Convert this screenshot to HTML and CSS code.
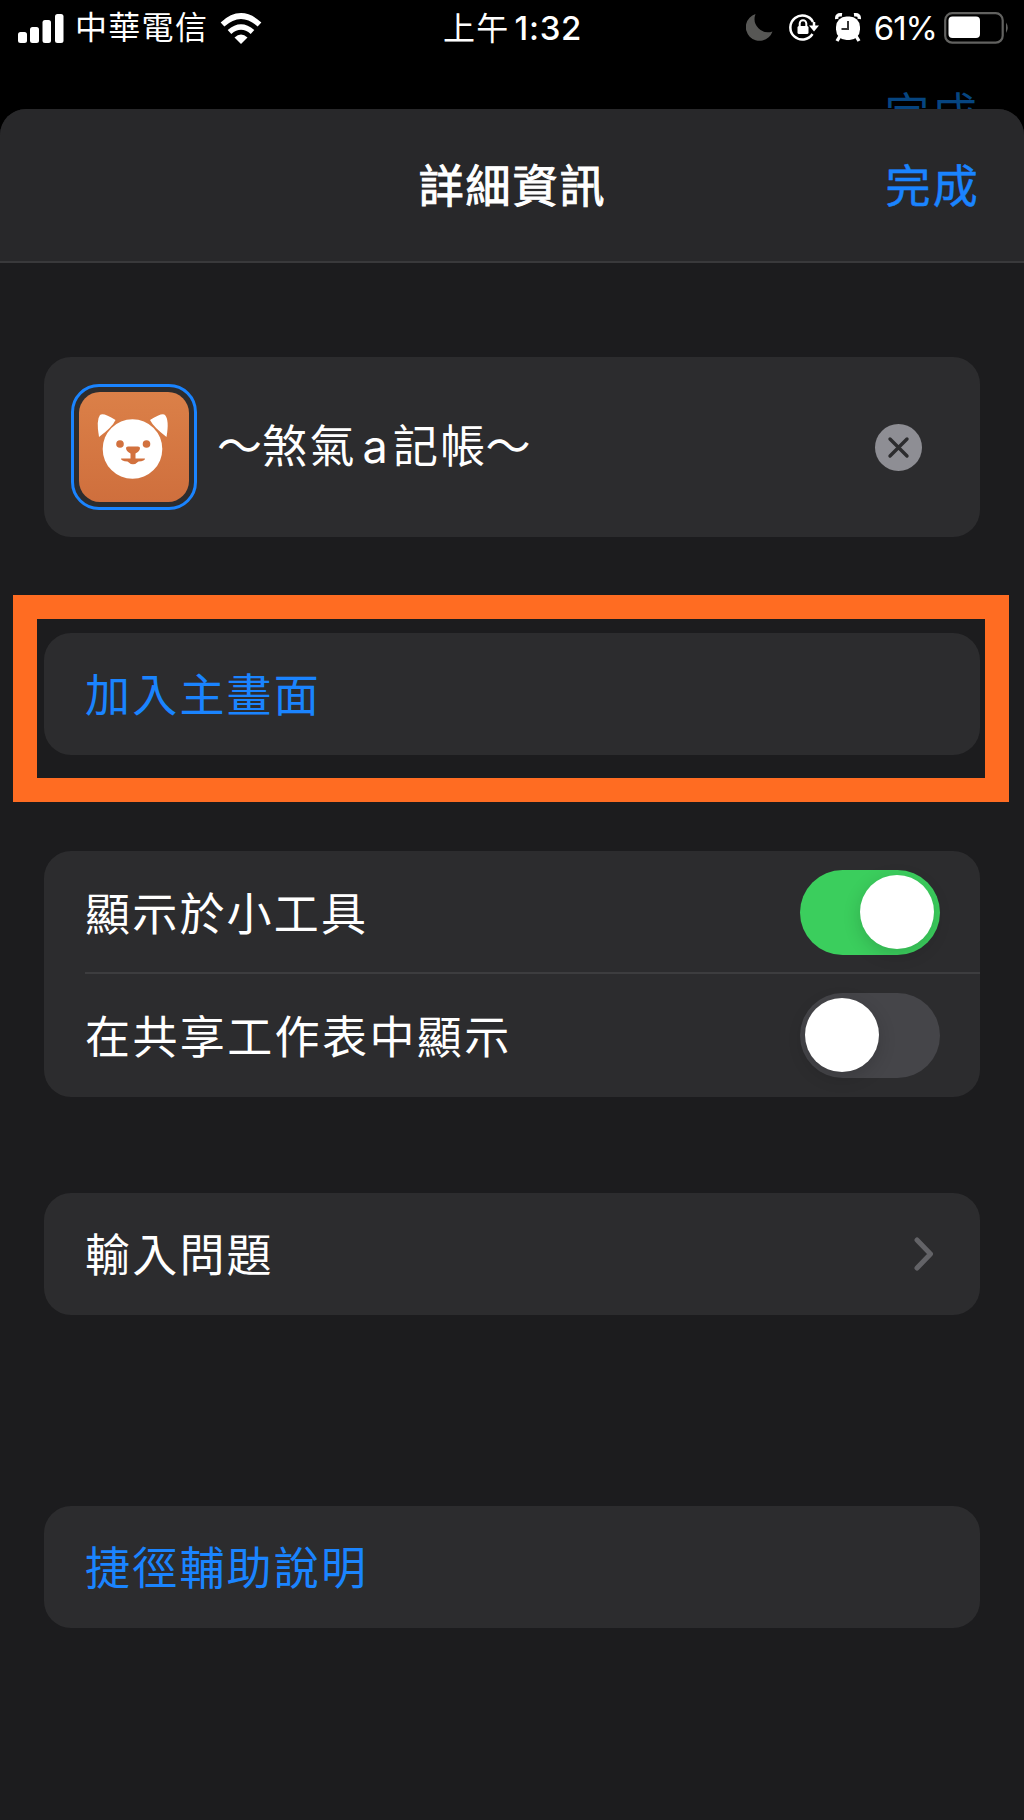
FILE: index.html
```html
<!DOCTYPE html>
<html lang="zh-Hant">
<head>
<meta charset="utf-8">
<title>詳細資訊</title>
<link rel="stylesheet" href="styles.css">
</head>
<body>
<div class="status">
  <div class="status-left">
    <svg class="signal" width="46" height="29" viewBox="0 0 46 29" fill="#fff"><rect x="0" y="18" width="9" height="11" rx="2.5"/><rect x="12" y="13" width="9" height="16" rx="2.5"/><rect x="24.500" y="6" width="8.500" height="23" rx="2.500"/><rect x="37" y="0" width="8.500" height="29" rx="2.500"/></svg>
    <span class="carrier">中華電信</span>
    <svg class="wifi" width="42" height="31" viewBox="0 0 42 31"><g fill="none" stroke="#fff" stroke-width="5.500"><path d="M2.500 11.500Q21-5.500 39.500 11.500"/><path d="M9.500 19Q21 9 32.500 19"/></g><path d="M14.500 24.500Q21 18.500 27.500 24.500L21 31Z" fill="#fff"/></svg>
  </div>
  <div class="time"><span>上午</span><span class="clock">1:32</span></div>
  <div class="status-right">
    <svg width="27" height="27" viewBox="0 0 27 27"><path d="M9.500 0A13.700 13.700 0 1 0 26.500 17.500A13.500 13.500 0 0 1 9.500 0Z" fill="#575755"/></svg>
    <svg class="lock" width="30" height="27" viewBox="0 0 30 27"><g fill="none" stroke="#fff" stroke-width="2.500"><path d="M24 8A12 12 0 1 0 23.500 20"/><path d="M10.700 13V9.500a3.300 3.300 0 0 1 6.600 0V13" stroke-width="2"/></g><rect x="8.500" y="12" width="11" height="8" rx="1.500" fill="#fff"/><path d="M20 11.500H30L25 17.500Z" fill="#fff"/><path d="M25 8v5" stroke="#fff" stroke-width="2.500"/></svg>
    <svg class="alarm" width="26" height="29" viewBox="0 0 26 29"><path d="M1.800 6Q1 1 7 1.800M24.200 6Q25 1 19 1.800M5 23L2 28M21 23L24 28" fill="none" stroke="#fff" stroke-width="3.400"/><rect x="1" y="3.500" width="24" height="23.500" rx="10.500" fill="#fff"/><path d="M13 8V16H6.500" fill="none" stroke="#333" stroke-width="2"/></svg>
    <span class="percent">61%</span>
    <svg class="battery" width="66" height="32" viewBox="0 0 66 32"><rect x="1.200" y="1.200" width="57.500" height="29.500" rx="7" fill="none" stroke="#626260" stroke-width="2.200"/><rect x="4.500" y="4.500" width="31.500" height="21.500" rx="4" fill="#fff"/><path d="M62 10.500Q65.500 15.500 62 21Z" fill="#626260"/></svg>
  </div>
</div>
<div class="backdrop"><span>完成</span></div>
<main class="sheet">
  <header class="header"><span></span><h1>詳細資訊</h1><a class="done">完成</a></header>
  <section class="card name-card">
    <div class="icon-ring"><div class="icon">
      <svg width="110" height="110" viewBox="0 0 110 110"><g fill="#fff"><path d="M20 45Q17 28 21 23Q24 20 36.500 28Q33.500 35 20 45Z"/><path d="M87.500 45Q90.500 28 86 23Q83.500 20 71 28Q74.500 35 87.500 45Z"/><circle cx="53.500" cy="57" r="29.800"/></g><g fill="#d2713e"><circle cx="41" cy="52" r="3.800"/><circle cx="67.500" cy="52" r="3.800"/><path d="M47 56Q47 54.500 49 54.500H59Q61 54.500 61 56Q61 59 56.500 61.500V66.500H66Q66 69 59.500 69.500Q54 75 48.500 69.500Q42 69 42 66.500H51.500V61.500Q47 59 47 56Z"/></g></svg>
    </div></div>
    <div class="name"><span class="tilde">～</span><span>煞氣</span><span class="latin">a</span><span>記帳</span><span class="tilde-end">～</span></div>
    <svg class="clear" width="48" height="48" viewBox="0 0 48 48"><circle cx="24.500" cy="24.500" r="23.500" fill="#8e8e94"/><path d="M16 16L33 33M33 16L16 33" stroke="#2c2c2e" stroke-width="3.400" stroke-linecap="round"/></svg>
  </section>
  <div class="highlight">
    <section class="card row link">加入主畫面</section>
  </div>
  <section class="card options">
    <div class="row first"><span>顯示於小工具</span><span class="toggle on"><i></i></span></div>
    <div class="line"></div>
    <div class="row second"><span>在共享工作表中顯示</span><span class="toggle"><i></i></span></div>
  </section>
  <section class="card row question"><span>輸入問題</span>
    <svg class="chevron" width="20" height="34" viewBox="0 0 20 34"><path d="M3 3L16.500 17L3 31" fill="none" stroke="#636367" stroke-width="5" stroke-linecap="round" stroke-linejoin="round"/></svg>
  </section>
  <section class="card row link help">捷徑輔助說明</section>
</main>
</body>
</html>
```
FILE: styles.css
```css
* { box-sizing: border-box; }
body {
  margin: 0;
  width: 1024px;
  height: 1820px;
  overflow: hidden;
  display: flex;
  flex-direction: column;
  background: #000;
  color: #fff;
  font-family: Inter, "Noto Sans CJK TC", sans-serif;
  font-size: 45px;
  letter-spacing: 2.2px;
}
svg { display: block; flex: none; }
.status {
  height: 56px;
  flex: none;
  display: grid;
  grid-template-columns: 1fr 140px 1fr;
  font-size: 32px;
  letter-spacing: 1.3px;
  line-height: 54px;
}
.status-left { display: flex; align-items: center; padding: 0 0 2px 18px; }
.carrier { margin-left: 11px; }
.wifi { margin-left: 12px; }
.time { display: flex; align-items: baseline; white-space: nowrap; padding: 1px 0 0 1px; }
.clock { margin-left: 5px; font-size: 33px; font-weight: 500; letter-spacing: .7px; }
.status-right { display: flex; align-items: center; justify-content: flex-end; padding: 0 14px 3px 0; }
.lock { margin-left: 16px; }
.alarm { margin-left: 16px; }
.percent { margin: 1px 0 0 13px; font-size: 33px; letter-spacing: -1px; }
.battery { margin-left: 7px; }
.backdrop {
  height: 53px;
  flex: none;
  overflow: hidden;
  text-align: right;
  padding: 32px 45px 0 0;
  line-height: 54px;
  color: #064580;
}
.sheet {
  flex: 1;
  background: #1c1c1e;
  border-radius: 26px 26px 0 0;
  overflow: hidden;
}
.header {
  height: 154px;
  display: grid;
  grid-template-columns: 1fr auto 1fr;
  align-items: center;
  background: #28282a;
  border-bottom: 2px solid #39393b;
  padding: 0 44px 4px 45px;
}
.header h1 { margin: 0; font-size: 45px; font-weight: 400; letter-spacing: 1.9px; -webkit-text-stroke: 1px #fff; }
.done { text-align: right; color: #1a84ff; -webkit-text-stroke: .5px #1a84ff; }
.card { margin: 0 44px; background: #2c2c2e; border-radius: 27px; }
.name-card { height: 180px; margin-top: 94px; display: flex; align-items: center; padding: 0 58px 0 27px; }
.icon-ring { width: 126px; height: 126px; border: 3px solid #1a84ff; border-radius: 28px; padding: 5px; }
.icon { width: 110px; height: 110px; border-radius: 21px; background: linear-gradient(#db8048, #cf6f3d); overflow: hidden; }
.name { display: flex; align-items: baseline; margin-left: 20px; padding-bottom: 8px; flex: 1; white-space: nowrap; }
.tilde { margin-right: -2px; }
.latin { margin: 0 3px 0 6px; }
.tilde-end { margin-left: -2px; }
.highlight { margin: 58px 15.500px 0 13px; height: 207px; border: 24px solid #ff6c22; padding-top: 14px; }
.highlight .card { margin: 0 4.500px 0 7px; }
.row { height: 122px; display: flex; align-items: center; justify-content: space-between; padding: 0 40px 4px 41px; }
.link { color: #1a84ff; }
.options { margin-top: 49px; height: 246px; }
.first { height: 121px; padding-bottom: 0; }
.second { padding-bottom: 2px; letter-spacing: 2.4px; }
.line { height: 2px; margin-left: 41px; background: #3d3d3f; }
.toggle { width: 140px; height: 85px; margin-top: 2px; border-radius: 43px; background: #454549; padding: 5.500px 5px; display: flex; }
.toggle i { width: 74px; height: 74px; border-radius: 50%; background: #fff; box-shadow: 0 5px 18px rgba(0,0,0,.16); }
.on { margin-top: 1px; padding-right: 6.500px; background: #3bce5d; justify-content: flex-end; }
.question { margin-top: 96px; }
.chevron { margin: 4px 6px 0 0; }
.help { margin-top: 191px; }
```
